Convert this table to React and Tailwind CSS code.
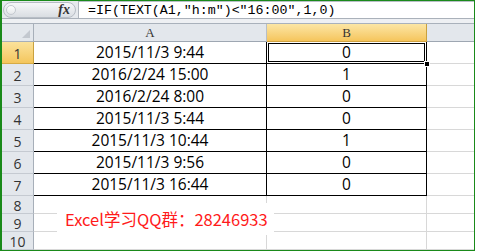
const data = [
  ["2015/11/3 9:44", "0"],
  ["2016/2/24 15:00", "1"],
  ["2016/2/24 8:00", "0"],
  ["2015/11/3 5:44", "0"],
  ["2015/11/3 10:44", "1"],
  ["2015/11/3 9:56", "0"],
  ["2015/11/3 16:44", "0"],
];

const cellFont = { fontFamily: '"Open Sans", "Liberation Sans", sans-serif' };

function RowHead({ n, active, h }) {
  return (
    <div
      className={`w-[32px] shrink-0 flex items-center justify-center pt-[1px] border-r border-b text-[14px] text-[#333] ${
        active
          ? "bg-gradient-to-b from-[#fbe29a] to-[#f4c65c] border-r-[#c9a13e] border-b-[#d6ab45]"
          : "bg-[#e3e7ec] border-r-[#a7afb9] border-b-[#c5cad1]"
      } ${h}`}
      style={cellFont}
    >
      {n}
    </div>
  );
}

export default function App() {
  return (
    <div className="w-[477px] h-[252px] bg-white overflow-hidden">
      <div className="relative w-[475px] h-[251px] border-t border-r border-b border-l-2 border-[#1a8a1a] flex flex-col overflow-hidden">
        {/* formula bar */}
        <div className="h-[20px] flex bg-[#e6e9ed] border-b border-[#aab1ba]">
          <div className="w-[76px] shrink-0 flex items-center pl-[1px]">
            <div className="relative w-[73px] h-[16px] rounded-full border border-[#b7bdc5] bg-gradient-to-b from-[#f6f7f9] to-[#d9dde2] flex items-center">
              <div className="ml-[2px] w-[10px] h-[10px] rounded-full border border-[#c4c9cf] bg-gradient-to-b from-white to-[#e4e7ea]" />
              <span
                className="ml-auto mr-[5px] italic font-bold text-[14px] leading-none text-[#333]"
                style={{ fontFamily: '"Liberation Serif", serif' }}
              >
                fx
              </span>
            </div>
          </div>
          <div className="w-px bg-[#b0b6be]" />
          <div className="flex-1 bg-white border-t border-[#b9bfc7] flex items-center pl-[9px]">
            <span
              className="text-[13.3px] text-black leading-none whitespace-pre"
              style={{ fontFamily: '"Liberation Mono", monospace' }}
            >
              =IF(TEXT(A1,"h:m")&lt;"16:00",1,0)
            </span>
          </div>
        </div>
        <div className="h-[5px] bg-[#eef0f3] border-b border-[#a9b1bb]" />

        {/* column headers */}
        <div className="h-[18px] flex">
          <div className="w-[32px] shrink-0 bg-[#e3e7ec] border-r border-b border-[#a7afb9] relative">
            <div className="absolute right-[3px] bottom-[3px] w-0 h-0 border-l-[8px] border-l-transparent border-b-[8px] border-b-[#c3c8cf]" />
          </div>
          <div
            className="w-[233px] shrink-0 bg-[#e3e7ec] border-r border-b border-r-[#b7bec7] border-b-[#9ea7b2] flex items-center justify-center text-[13px] text-[#333]"
            style={{ fontFamily: '"Liberation Serif", serif' }}
          >
            A
          </div>
          <div
            className="w-[160px] shrink-0 bg-gradient-to-b from-[#fce6a4] to-[#f5c55b] border-r border-b border-r-[#c9a13e] border-b-[#d0a241] flex items-center justify-center text-[13px] text-[#333]"
            style={{ fontFamily: '"Liberation Serif", serif' }}
          >
            B
          </div>
          <div className="flex-1 bg-[#e3e7ec] border-b border-[#9ea7b2]" />
        </div>

        {/* data rows */}
        {data.map(([a, b], i) => (
          <div key={i} className="h-[22px] flex">
            <RowHead n={i + 1} active={i === 0} h="h-[22px]" />
            <div
              className="w-[233px] shrink-0 border-r border-b border-black flex items-center justify-center pt-[1px] text-[15.5px] text-black"
              style={cellFont}
            >
              {a}
            </div>
            <div
              className={`relative w-[160px] shrink-0 border-r border-b border-black flex items-center justify-center pt-[1px] text-[15.5px] text-black ${
                i === 0 ? "shadow-[inset_0_0_0_1px_#fff,inset_0_0_0_2px_#000]" : ""
              }`}
              style={cellFont}
            >
              {b}
              {i === 0 && (
                <div className="absolute right-[-4px] bottom-[-4px] w-[6px] h-[6px] bg-black border border-white z-10" />
              )}
            </div>
            <div className="flex-1 border-b border-[#d8d8d8]" />
          </div>
        ))}

        {/* empty rows */}
        {[8, 9, 10].map((n) => (
          <div key={n} className="h-[18px] flex shrink-0">
            <RowHead n={n} h="h-[18px]" />
            <div className="w-[233px] shrink-0 border-r border-b border-[#d8d8d8]" />
            <div className="w-[160px] shrink-0 border-r border-b border-[#d8d8d8]" />
            <div className="flex-1 border-b border-[#d8d8d8]" />
          </div>
        ))}

        {/* text box over the sheet */}
        <div className="absolute left-[55px] top-[202px] w-[217px] h-[32px] bg-white flex items-center pl-[8px]">
          <span
            className="text-[16.5px] leading-none text-[#ff1a1a] whitespace-nowrap"
            style={{ fontFamily: '"Noto Sans CJK SC", "Noto Sans", sans-serif' }}
          >
            Excel学习QQ群：28246933
          </span>
        </div>
      </div>
    </div>
  );
}
